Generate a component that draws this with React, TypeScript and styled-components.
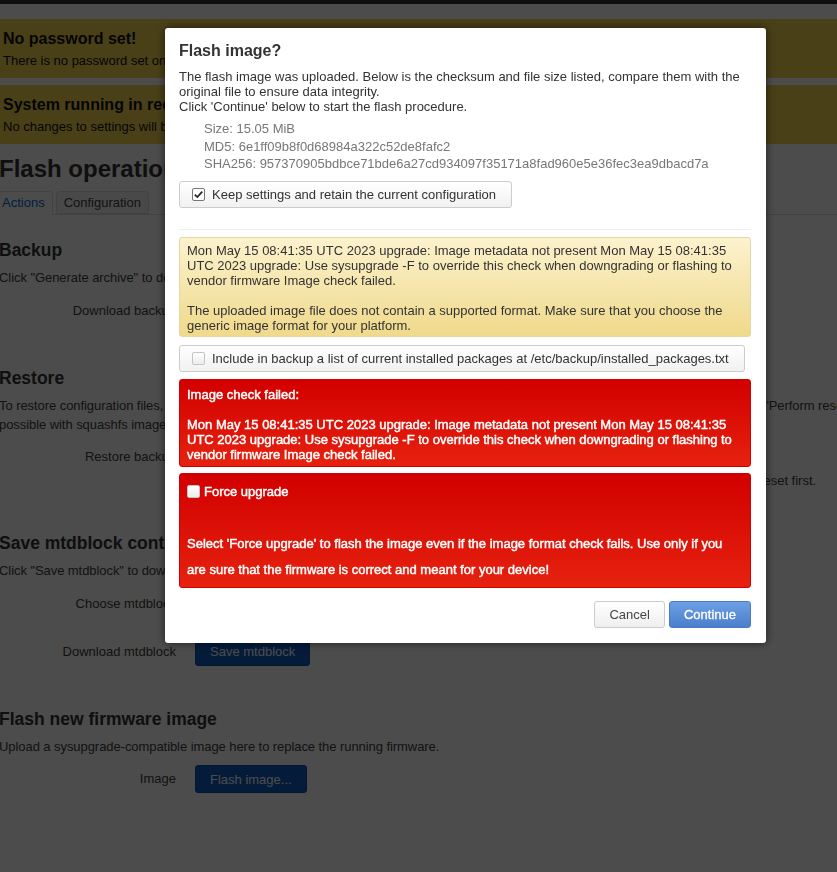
import React from 'react';
import styled, { createGlobalStyle } from 'styled-components';

const GlobalStyle = createGlobalStyle`
  * {
    box-sizing: border-box;
  }

  html,
  body {
    margin: 0;
    padding: 0;
    overflow: hidden;
    background: #fff;
  }

  body {
    font-family: "Liberation Sans", Arial, sans-serif;
    font-size: 13px;
    color: #404040;
  }
`;

// ---- background page ----

const Page = styled.div`
  width: 896px;
  margin-left: -1px;
`;

const TopBar = styled.div`
  height: 4px;
  background: #333;
`;

const Main = styled.main`
  padding-top: 15px;
`;

const Alert = styled.div`
  background: #f8d550;
  color: #111;
  padding: 11px 4px 10px;

  & + & {
    margin-top: 7px;
  }
`;

const AlertTitle = styled.h4`
  margin: 0 0 5px;
  font-size: 16px;
  line-height: 18px;
  font-weight: bold;
`;

const AlertText = styled.div`
  line-height: 15px;
`;

const PageTitle = styled.h2`
  margin: 11px 0 0;
  font-size: 24px;
  line-height: 28px;
  font-weight: bold;
  color: #333;
`;

const TabList = styled.ul`
  display: flex;
  margin: 8px 0 0 -5px;
  padding: 0;
  list-style: none;
  border-bottom: 1px solid #ddd;
`;

const Tab = styled.li<{ $active?: boolean }>`
  height: ${p => (p.$active ? '24px' : '23px')};
  margin: 0 3px ${p => (p.$active ? '-1px' : '0')} 0;
  padding: 0 7px;
  border: 1px solid #ddd;
  border-bottom: ${p => (p.$active ? 'none' : '1px solid #ddd')};
  border-radius: 4px 4px 0 0;
  background: ${p => (p.$active ? '#fff' : '#f6f6f6')};
  color: ${p => (p.$active ? '#0069d6' : '#404040')};
  line-height: 22px;
`;

const Section = styled.section<{ $first?: boolean }>`
  margin-top: ${p => (p.$first ? '25px' : '32.5px')};
`;

const SectionTitle = styled.h3`
  margin: 0 0 7px;
  font-size: 17.5px;
  line-height: 21px;
  font-weight: bold;
  color: #333;
`;

const SectionDesc = styled.p`
  margin: 0;
  line-height: 19px;
  letter-spacing: -0.065px;
`;

const FieldRow = styled.div`
  display: flex;
  align-items: flex-start;
  padding: 9.5px 0 10.5px;
`;

const FieldLabel = styled.label`
  width: 177px;
  margin-right: 19px;
  text-align: right;
  line-height: 28px;
`;

const FieldValue = styled.div`
  display: flex;
  flex-direction: column;
  align-items: flex-start;
`;

const FieldHint = styled.div`
  margin-left: 16px;
  line-height: 19px;
  white-space: nowrap;
`;

const ActionButton = styled.button`
  height: 28px;
  padding: 0 14px;
  border: 1px solid #0b4ea9;
  border-radius: 3px;
  background: #0e5ac4;
  color: #fff;
  font: inherit;
`;

const SelectBox = styled.div`
  width: 210px;
  height: 28px;
  padding: 0 8px;
  border: 1px solid #ccc;
  border-radius: 3px;
  line-height: 26px;
`;

// ---- dialog ----

const Overlay = styled.div`
  position: fixed;
  inset: 0;
  z-index: 10;
  background: rgba(0, 0, 0, 0.7);
`;

const Modal = styled.div`
  position: fixed;
  top: 28px;
  left: 165px;
  z-index: 11;
  width: 601px;
  padding: 13px 15px 15px 14px;
  border-radius: 3px;
  background: #fff;
  color: #333;
  box-shadow: 0 0 10px rgba(0, 0, 0, 0.6);
`;

const ModalTitle = styled.h4`
  margin: 0;
  font-size: 16px;
  line-height: 19px;
  font-weight: bold;
`;

const ModalText = styled.p`
  margin: 9px 0 0;
  line-height: 15px;
`;

const FileInfo = styled.ul`
  margin: 6px 0 0;
  padding-left: 25px;
  list-style: none;
  color: #777;
  line-height: 17.5px;
`;

const CheckButton = styled.label`
  display: inline-flex;
  align-items: center;
  gap: 7px;
  height: 27px;
  margin-top: 8px;
  padding: 0 15px 0 12px;
  border: 1px solid #ccc;
  border-radius: 3px;
  background: linear-gradient(#fff, #f1f1f1);
`;

const CheckBox = styled.span<{ $checked?: boolean }>`
  display: inline-flex;
  align-items: center;
  justify-content: center;
  flex: none;
  width: 13px;
  height: 13px;
  border: 1px solid ${p => (p.$checked ? '#767676' : '#c4c4c4')};
  border-radius: 2px;
  background: ${p => (p.$checked ? '#fff' : 'linear-gradient(#fff, #ececec)')};
`;

const Divider = styled.hr`
  height: 1px;
  margin: 21px 0 7px;
  border: 0;
  background: #eee;
`;

const Notice = styled.div<{ $tone: 'warning' | 'danger' }>`
  padding: ${p => (p.$tone === 'warning' ? '5px 7px 3px' : '7px 7px 4px')};
  border: 1px solid ${p => (p.$tone === 'warning' ? '#e3d7a6' : '#cf0000')};
  border-radius: 3px;
  background: ${p =>
    p.$tone === 'warning'
      ? 'linear-gradient(#fcf2cd, #efd98b)'
      : 'linear-gradient(#d20000, #e6220f)'};
  color: ${p => (p.$tone === 'warning' ? '#333' : '#fff')};
  line-height: 15px;
  -webkit-text-stroke: ${p => (p.$tone === 'danger' ? '0.45px #fff' : '0')};
`;

const ModalBlock = styled.div`
  margin-top: 7px;
`;

const ForcePanel = styled.div`
  margin-top: 6px;
  padding: 5px 7px 4px;
  border: 1px solid #cf0000;
  border-radius: 3px;
  background: linear-gradient(#d20000, #e6220f);
  color: #fff;
  line-height: 26px;
  -webkit-text-stroke: 0.45px #fff;
`;

const ForceLabel = styled.label`
  display: flex;
  align-items: center;
  gap: 4px;
`;

const ForceNote = styled.div`
  margin-top: 26px;
`;

const ModalFooter = styled.div`
  display: flex;
  justify-content: flex-end;
  gap: 4px;
  margin-top: 13px;
`;

const DialogButton = styled.button<{ $primary?: boolean }>`
  height: 27px;
  padding: 0 14px;
  border: 1px solid ${p => (p.$primary ? '#4a7bc6' : '#ccc')};
  border-radius: 3px;
  background: ${p =>
    p.$primary ? 'linear-gradient(#6d9fe4, #4a7fcb)' : 'linear-gradient(#fff, #efefef)'};
  color: ${p => (p.$primary ? '#fff' : '#444')};
  font: inherit;
  -webkit-text-stroke: ${p => (p.$primary ? '0.3px #fff' : '0')};
`;

const CheckMark = () => (
  <svg width="11" height="11" viewBox="0 0 11 11">
    <path d="M1.8 5.6 L4.3 8.1 L9.3 2.6" fill="none" stroke="#222" strokeWidth="1.7" />
  </svg>
);

const App: React.FC = () => {
  return (
    <>
      <GlobalStyle />
      <Page>
        <TopBar />
        <Main>
          <Alert>
            <AlertTitle>No password set!</AlertTitle>
            <AlertText>
              There is no password set on this router. Please configure a root password to protect the web interface.
            </AlertText>
          </Alert>
          <Alert>
            <AlertTitle>System running in recovery (initramfs) mode.</AlertTitle>
            <AlertText>
              No changes to settings will be stored and are lost after rebooting. This mode should only be used to install a firmware upgrade
            </AlertText>
          </Alert>

          <PageTitle>Flash operations</PageTitle>
          <TabList>
            <Tab $active>Actions</Tab>
            <Tab>Configuration</Tab>
          </TabList>

          <Section $first>
            <SectionTitle>Backup</SectionTitle>
            <SectionDesc>
              Click "Generate archive" to download a tar archive of the current configuration files.
            </SectionDesc>
            <FieldRow>
              <FieldLabel>Download backup</FieldLabel>
              <FieldValue>
                <ActionButton>Generate archive</ActionButton>
              </FieldValue>
            </FieldRow>
          </Section>

          <Section>
            <SectionTitle>Restore</SectionTitle>
            <SectionDesc>
              To restore configuration files, you can upload a previously generated backup archive here. To reset the firmware to its initial state, click "Perform reset" (only possible with squashfs images).
            </SectionDesc>
            <FieldRow>
              <FieldLabel>Restore backup</FieldLabel>
              <FieldValue>
                <ActionButton>Upload archive...</ActionButton>
                <FieldHint>
                  Custom files (certificates, scripts) may remain on the system. To prevent this, perform a factory-reset first.
                </FieldHint>
              </FieldValue>
            </FieldRow>
          </Section>

          <Section>
            <SectionTitle>Save mtdblock contents</SectionTitle>
            <SectionDesc>
              Click "Save mtdblock" to download specified mtdblock file. (NOTE: THIS FEATURE IS FOR PROFESSIONALS! )
            </SectionDesc>
            <FieldRow>
              <FieldLabel>Choose mtdblock</FieldLabel>
              <FieldValue>
                <SelectBox>kernel</SelectBox>
              </FieldValue>
            </FieldRow>
            <FieldRow>
              <FieldLabel>Download mtdblock</FieldLabel>
              <FieldValue>
                <ActionButton>Save mtdblock</ActionButton>
              </FieldValue>
            </FieldRow>
          </Section>

          <Section>
            <SectionTitle>Flash new firmware image</SectionTitle>
            <SectionDesc>
              Upload a sysupgrade-compatible image here to replace the running firmware.
            </SectionDesc>
            <FieldRow>
              <FieldLabel>Image</FieldLabel>
              <FieldValue>
                <ActionButton>Flash image...</ActionButton>
              </FieldValue>
            </FieldRow>
          </Section>
        </Main>
      </Page>

      <Overlay />
      <Modal>
        <ModalTitle>Flash image?</ModalTitle>
        <ModalText>
          The flash image was uploaded. Below is the checksum and file size listed, compare them with the original file to ensure data integrity.
          <br />
          Click 'Continue' below to start the flash procedure.
        </ModalText>
        <FileInfo>
          <li>Size: 15.05 MiB</li>
          <li>MD5: 6e1ff09b8f0d68984a322c52de8fafc2</li>
          <li>SHA256: 957370905bdbce71bde6a27cd934097f35171a8fad960e5e36fec3ea9dbacd7a</li>
        </FileInfo>
        <CheckButton>
          <CheckBox $checked>
            <CheckMark />
          </CheckBox>
          Keep settings and retain the current configuration
        </CheckButton>

        <Divider />

        <Notice $tone="warning">
          Mon May 15 08:41:35 UTC 2023 upgrade: Image metadata not present Mon May 15 08:41:35 UTC 2023 upgrade: Use sysupgrade -F to override this check when downgrading or flashing to vendor firmware Image check failed.
          <br />
          <br />
          The uploaded image file does not contain a supported format. Make sure that you choose the generic image format for your platform.
        </Notice>

        <CheckButton>
          <CheckBox />
          Include in backup a list of current installed packages at /etc/backup/installed_packages.txt
        </CheckButton>

        <ModalBlock>
          <Notice $tone="danger">
            Image check failed:
            <br />
            <br />
            Mon May 15 08:41:35 UTC 2023 upgrade: Image metadata not present Mon May 15 08:41:35 UTC 2023 upgrade: Use sysupgrade -F to override this check when downgrading or flashing to vendor firmware Image check failed.
          </Notice>
        </ModalBlock>

        <ForcePanel>
          <ForceLabel>
            <CheckBox />
            Force upgrade
          </ForceLabel>
          <ForceNote>
            Select 'Force upgrade' to flash the image even if the image format check fails. Use only if you are sure that the firmware is correct and meant for your device!
          </ForceNote>
        </ForcePanel>

        <ModalFooter>
          <DialogButton>Cancel</DialogButton>
          <DialogButton $primary>Continue</DialogButton>
        </ModalFooter>
      </Modal>
    </>
  );
};

export default App;
